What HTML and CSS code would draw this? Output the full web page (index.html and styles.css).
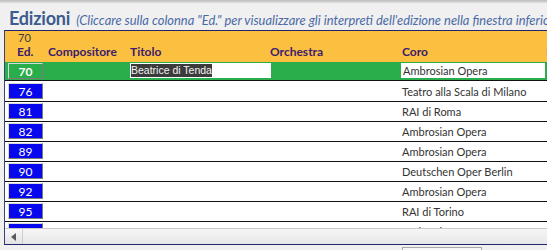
FILE: index.html
```html
<!DOCTYPE html>
<html lang="it">
<head>
<meta charset="utf-8">
<title>Edizioni</title>
<link rel="stylesheet" href="styles.css">
</head>
<body>
<div class="topbar"></div>
<div class="title">
  <span class="t-main">Edizioni</span>
  <span class="t-hint">(Cliccare sulla colonna "Ed." per visualizzare gli interpreti dell'edizione nella finestra inferiore)</span>
</div>
<div class="form">
  <div class="head">
    <div class="h-ed"><span class="h-count">70</span><span class="h-lab">Ed.</span></div>
    <div class="h-col"><span class="h-lab">Compositore</span></div>
    <div class="h-col"><span class="h-lab">Titolo</span></div>
    <div class="h-col"><span class="h-lab">Orchestra</span></div>
    <div class="h-col"><span class="h-lab">Coro</span></div>
    <div class="h-col"><span class="h-lab">Interpreti</span></div>
  </div>
  <div class="rows">
    <div class="row sel">
      <div class="c-ed"><span class="btn btn-sel">70</span></div>
      <div></div>
      <div class="c-box"><span class="tbox tbox-t"><span class="hl">Beatrice di Tenda</span></span></div>
      <div></div>
      <div class="c-box"><span class="tbox">Ambrosian Opera</span></div>
      <div></div>
    </div>
    <div class="list">
      <div class="row"><div class="c-ed"><span class="btn">76</span></div><div></div><div></div><div></div><div class="c-txt">Teatro alla Scala di Milano</div><div></div></div>
      <div class="row"><div class="c-ed"><span class="btn">81</span></div><div></div><div></div><div></div><div class="c-txt">RAI di Roma</div><div></div></div>
      <div class="row"><div class="c-ed"><span class="btn">82</span></div><div></div><div></div><div></div><div class="c-txt">Ambrosian Opera</div><div></div></div>
      <div class="row"><div class="c-ed"><span class="btn">89</span></div><div></div><div></div><div></div><div class="c-txt">Ambrosian Opera</div><div></div></div>
      <div class="row"><div class="c-ed"><span class="btn">90</span></div><div></div><div></div><div></div><div class="c-txt">Deutschen Oper Berlin</div><div></div></div>
      <div class="row"><div class="c-ed"><span class="btn">92</span></div><div></div><div></div><div></div><div class="c-txt">Ambrosian Opera</div><div></div></div>
      <div class="row"><div class="c-ed"><span class="btn">95</span></div><div></div><div></div><div></div><div class="c-txt">RAI di Torino</div><div></div></div>
      <div class="row"><div class="c-ed"><span class="btn">96</span></div><div></div><div></div><div></div><div class="c-txt">Ambrosian Opera</div><div></div></div>
    </div>
  </div>
  <div class="hscroll">
    <div class="sb-btn"><svg width="6" height="8" viewBox="0 0 6 8"><path d="M5 0 L0 4 L5 8 Z" fill="#5a5a5a"/></svg></div>
    <div class="sb-track"></div>
  </div>
</div>
<div class="footer"><div class="stub"></div></div>
</body>
</html>
```
FILE: styles.css
```css
html, body {
  margin: 0;
  padding: 0;
}
body {
  width: 547px;
  height: 250px;
  overflow: hidden;
  background: #f0f0f0;
  font-family: Lato, "Open Sans", sans-serif;
}
.topbar {
  height: 3px;
  background: linear-gradient(#bdbdbd, #dedede);
}
.title {
  height: 27px;
  display: flex;
  align-items: baseline;
  gap: 6px;
  padding-left: 9px;
  white-space: nowrap;
  overflow: hidden;
  box-sizing: border-box;
  padding-top: 4px;
}
.t-main {
  font-size: 18px;
  font-weight: bold;
  color: #3c5b8e;
  letter-spacing: -0.2px;
}
.t-hint {
  font-size: 12.9px;
  font-style: italic;
  color: #4a6aa6;
}
.form {
  margin-left: 4px;
  width: 620px;
  border-top: 1px solid #23246e;
  border-left: 1px solid #3a3f7e;
  border-bottom: 1px solid #23246e;
}
.head,
.row {
  display: grid;
  grid-template-columns: 43px 82px 140px 131px 142px 1fr;
}
.head {
  height: 31px;
  background: #fbc03f;
  color: #3b1c6e;
  font-size: 12px;
  font-weight: bold;
}
.h-ed,
.h-col {
  display: flex;
  flex-direction: column;
  justify-content: flex-end;
  padding-bottom: 3px;
}
.h-ed {
  padding-left: 12px;
}
.h-col:nth-child(5) {
  padding-left: 1px;
}
.h-col:nth-child(6) {
  padding-left: 3px;
}
.h-count {
  font-weight: normal;
  font-size: 11px;
  color: #3a3a3a;
  padding-left: 1px;
  line-height: 13px;
}
.h-lab {
  line-height: 15px;
}
.rows {
  height: 166px;
  overflow: hidden;
  background: #fff;
}
.row {
  height: 19px;
  border-bottom: 1px solid #111;
  align-items: center;
}
.row.sel {
  height: 18px;
  background: #2aad4b;
}
.list {
  padding-top: 1px;
}
.c-ed {
  align-self: start;
  padding: 1px 0 0 3px;
}
.btn {
  display: flex;
  align-items: center;
  justify-content: center;
  width: 35px;
  height: 16px;
  box-sizing: border-box;
  background: #0808ee;
  color: #fff;
  font-size: 12px;
  border: 1px solid;
  border-color: #d8d8d8 #7a7a7a #7a7a7a #d8d8d8;
}
.btn-sel {
  background: #2aad4b;
  font-weight: bold;
}
.c-box {
  align-self: start;
  padding-top: 1px;
}
.tbox {
  display: flex;
  align-items: center;
  height: 15px;
  width: 144px;
  background: #fff;
  font-size: 11px;
  color: #333;
  padding-left: 2px;
  box-sizing: border-box;
  white-space: nowrap;
}
.tbox-t {
  width: 141px;
  padding-left: 1px;
  font-family: "Liberation Sans", sans-serif;
  font-size: 10.5px;
}
.hl {
  background: #3b3b3b;
  color: #f2f2f2;
  line-height: 13px;
}
.c-txt {
  font-size: 11px;
  color: #333;
  padding-left: 1px;
  white-space: nowrap;
}
.hscroll {
  display: flex;
  height: 16px;
  border-top: 1px solid #c9c9c9;
  box-sizing: border-box;
  background: linear-gradient(#f6f6f6, #e6e6e6);
}
.sb-btn {
  width: 17px;
  display: flex;
  align-items: center;
  justify-content: center;
  border-right: 1px solid #cfcfcf;
  background: linear-gradient(#f8f8f8, #e2e2e2);
}
.sb-track {
  flex: 1;
}
.footer {
  padding: 2px 0 0 402px;
}
.stub {
  width: 78px;
  height: 8px;
  border: 1px solid #a9a9a9;
  border-bottom: none;
  background: #f6f6f6;
}
```
